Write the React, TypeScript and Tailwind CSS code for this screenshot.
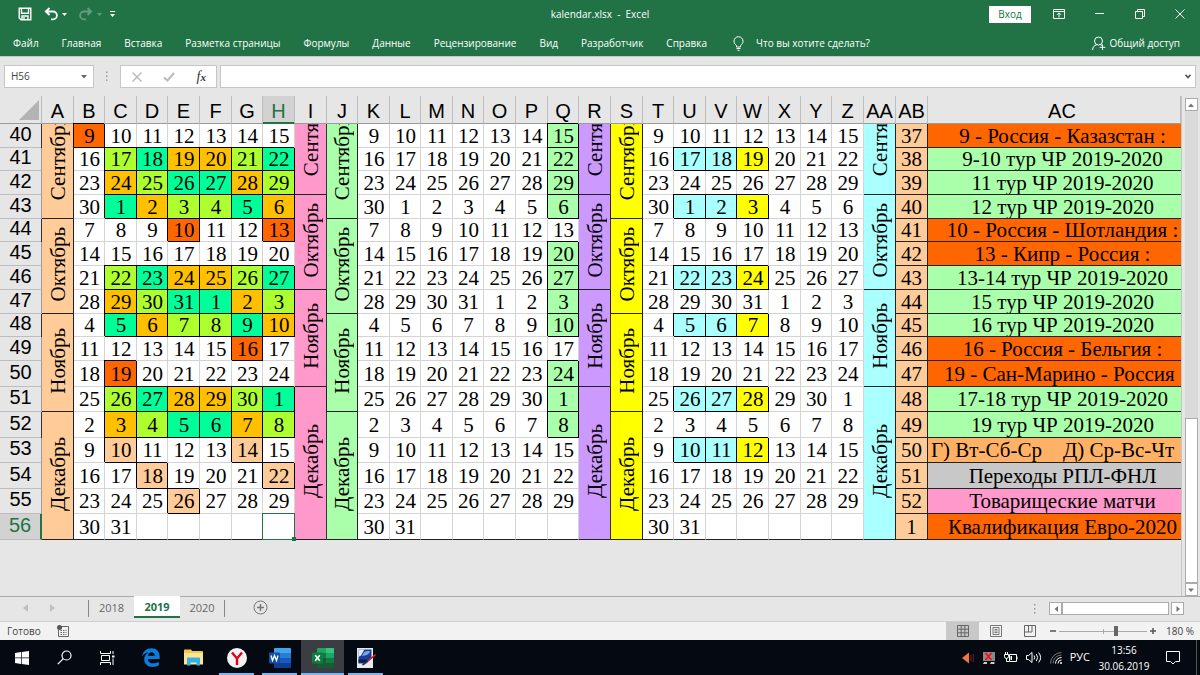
import clsx from 'clsx';
import type { ReactNode } from 'react';

const menu = [
  'Файл',
  'Главная',
  'Вставка',
  'Разметка страницы',
  'Формулы',
  'Данные',
  'Рецензирование',
  'Вид',
  'Разработчик',
  'Справка',
];

const columns = [
  'A', 'B', 'C', 'D', 'E', 'F', 'G', 'H', 'I', 'J', 'K', 'L', 'M', 'N', 'O',
  'P', 'Q', 'R', 'S', 'T', 'U', 'V', 'W', 'X', 'Y', 'Z', 'AA', 'AB', 'AC',
];

// narrow columns are 31px, the rest 32px, AC takes what is left
const narrow = ['B', 'D', 'G', 'J', 'L', 'N', 'Q', 'T', 'V', 'Y'];

const fills: Record<string, string> = {
  g: 'bg-[#adff2f]',
  s: 'bg-[#00ff99]',
  y: 'bg-[#ffc000]',
  o: 'bg-[#ff6600]',
  p: 'bg-[#ffcc99]',
  l: 'bg-[#aaffaa]',
  c: 'bg-[#aaffff]',
  w: 'bg-[#ffff00]',
  d: 'bg-[#ffb266]',
  e: 'bg-[#c8c8c8]',
  k: 'bg-[#ff99cc]',
};

// one line per week: row height, three week blocks, week number, note
const rows = [
  { h: 'h-[24px]', a: 'o......', b: '......l', c: '.......', week: 37, fill: 'o', note: '9 - Россия - Казазстан :' },
  { h: 'h-[23px]', a: '.gsyygs', b: '......l', c: '.ccw...', week: 38, fill: 'l', note: '9-10 тур ЧР 2019-2020' },
  { h: 'h-[24px]', a: '.ygssyg', b: '......l', c: '.......', week: 39, fill: 'l', note: '11 тур ЧР 2019-2020' },
  { h: 'h-[24px]', a: '.syggsy', b: '......l', c: '.ccw...', week: 40, fill: 'l', note: '12 тур ЧР 2019-2020' },
  { h: 'h-[23px]', a: '...o..o', b: '.......', c: '.......', week: 41, fill: 'o', note: '10 - Россия - Шотландия :' },
  { h: 'h-[24px]', a: '.......', b: '......l', c: '.......', week: 42, fill: 'o', note: '13 - Кипр - Россия :' },
  { h: 'h-[24px]', a: '.gsyygs', b: '......l', c: '.ccw...', week: 43, fill: 'l', note: '13-14 тур ЧР 2019-2020' },
  { h: 'h-[24px]', a: '.ygssyg', b: '......l', c: '.......', week: 44, fill: 'l', note: '15 тур ЧР 2019-2020' },
  { h: 'h-[23px]', a: '.syggsy', b: '......l', c: '.ccw...', week: 45, fill: 'l', note: '16 тур ЧР 2019-2020' },
  { h: 'h-[24px]', a: '.....o.', b: '.......', c: '.......', week: 46, fill: 'o', note: '16 - Россия - Бельгия :' },
  { h: 'h-[26px]', a: '.o.....', b: '......l', c: '.......', week: 47, fill: 'o', note: '19 - Сан-Марино - Россия  ' },
  { h: 'h-[25px]', a: '.gsyygs', b: '......l', c: '.ccw...', week: 48, fill: 'l', note: '17-18 тур ЧР 2019-2020' },
  { h: 'h-[26px]', a: '.ygssyg', b: '......l', c: '.......', week: 49, fill: 'l', note: '19 тур ЧР 2019-2020' },
  { h: 'h-[25px]', a: '.p...p.', b: '.......', c: '.ccw...', week: 50, fill: 'd', note: 'Г) Вт-Сб-Ср    Д) Ср-Вс-Чт' },
  { h: 'h-[26px]', a: '..p...p', b: '.......', c: '.......', week: 51, fill: 'e', note: 'Переходы РПЛ-ФНЛ' },
  { h: 'h-[25px]', a: '...p...', b: '.......', c: '.......', week: 52, fill: 'k', note: 'Товарищеские матчи' },
  { h: 'h-[26px]', a: '.......', b: '.......', c: '.......', week: 1, fill: 'o', note: 'Квалификация Евро-2020' },
];

const lateMonths: Record<number, [string, number]> = {
  0: ['Сентябрь', 4],
  4: ['Октябрь', 4],
  8: ['Ноябрь', 4],
  12: ['Декабрь', 5],
};

const earlyMonths: Record<number, [string, number]> = {
  0: ['Сентябрь', 3],
  3: ['Октябрь', 4],
  7: ['Ноябрь', 4],
  11: ['Декабрь', 6],
};

const dayOf = (row: number, col: number) => {
  const date = new Date(Date.UTC(2019, 8, 9 + row * 7 + col));
  return date.getUTCFullYear() === 2019 ? date.getUTCDate() : '';
};

const Month = ({
  row,
  months,
  color,
}: {
  row: number;
  months: Record<number, [string, number]>;
  color: string;
}) => {
  if (!months[row]) return null;
  const [name, span] = months[row];
  return (
    <td
      rowSpan={span}
      className={clsx(
        'p-0 border-r border-b border-[#222] shadow-[-1px_0_0_0_#333]',
        row === 0 ? 'align-bottom' : 'align-middle',
        color
      )}
    >
      <div
        className={clsx(
          'flex justify-center overflow-hidden',
          row === 0 ? 'items-end mb-[18px]' : 'pb-1',
          row === 0 && (span === 4 ? 'h-[76px]' : 'h-[52px]')
        )}
      >
        <span className="leading-6 rotate-180 [writing-mode:vertical-rl]">
          {name}
        </span>
      </div>
    </td>
  );
};

const Week = ({
  row,
  pattern,
  selected,
}: {
  row: number;
  pattern: string;
  selected?: number;
}) => (
  <>
    {pattern.split('').map((code, col) => (
      <td
        key={col}
        className={clsx(
          'relative p-0 pl-px border-r border-b',
          code === '.'
            ? 'bg-white border-[#d4d4d4]'
            : 'border-black shadow-[-1px_-1px_0_0_#000]',
          row === 16 && 'border-b-[#222]',
          fills[code]
        )}
      >
        {dayOf(row, col)}
        {selected === col && (
          <span className="absolute -inset-px border border-[#217346]">
            <span className="absolute -right-0.5 -bottom-0.5 size-1 bg-[#217346]" />
          </span>
        )}
      </td>
    ))}
  </>
);

const Sheet = () => (
  <table className="w-full table-fixed border-separate border-spacing-0 text-center font-['Liberation_Serif',serif] text-[21px] leading-5 text-black">
    <colgroup>
      <col className="w-[42px]" />
      {columns.map((name) => (
        <col
          key={name}
          className={
            name === 'AC' ? '' : narrow.includes(name) ? 'w-[31px]' : 'w-[32px]'
          }
        />
      ))}
    </colgroup>
    <thead className="font-['Liberation_Sans',sans-serif] text-xl/6">
      <tr className="h-[28px]">
        <th className="p-0 border-r border-b border-r-[#bdbdbd] border-b-[#9b9b9b]">
          <svg viewBox="0 0 20 20" className="ml-auto mr-0.5 size-5">
            <path d="M20 0v20H0z" fill="#b3b3b3" />
          </svg>
        </th>
        {columns.map((name) => (
          <th
            key={name}
            className={clsx(
              'p-0 pt-0.5 border-r border-b border-r-[#bdbdbd] font-normal whitespace-nowrap',
              name === 'H'
                ? 'bg-[#d2d2d2] text-[#217346] border-b-[#217346] shadow-[inset_0_-1px_0_0_#217346]'
                : 'border-b-[#9b9b9b]',
              name === 'AC' && 'pl-4'
            )}
          >
            <span className="flex justify-center">{name}</span>
          </th>
        ))}
      </tr>
    </thead>
    <tbody>
      {rows.map((item, row) => (
        <tr key={row} className={item.h}>
          <th
            className={clsx(
              "p-0 pb-1 border-r border-b border-r-[#9b9b9b] border-b-[#bdbdbd] font-['Liberation_Sans',sans-serif] text-xl font-normal leading-4",
              row === 16 && 'bg-[#d2d2d2] text-[#217346] border-r-2 border-r-[#217346]'
            )}
          >
            {40 + row}
          </th>
          <Month row={row} months={lateMonths} color="bg-[#ffcc99]" />
          <Week row={row} pattern={item.a} selected={row === 16 ? 6 : undefined} />
          <Month row={row} months={earlyMonths} color="bg-[#ff99cc]" />
          <Month row={row} months={lateMonths} color="bg-[#aaffaa]" />
          <Week row={row} pattern={item.b} />
          <Month row={row} months={earlyMonths} color="bg-[#cc99ff]" />
          <Month row={row} months={lateMonths} color="bg-[#ffff00]" />
          <Week row={row} pattern={item.c} />
          <Month row={row} months={earlyMonths} color="bg-[#aaffff]" />
          <td className="p-0 border-r border-b border-[#222] bg-[#ffcc99]">
            {item.week}
          </td>
          <td
            className={clsx(
              'p-0 border-b border-[#222] whitespace-pre overflow-hidden',
              item.fill === 'd' ? 'pr-1' : 'pl-4',
              fills[item.fill]
            )}
          >
            {item.note}
          </td>
        </tr>
      ))}
    </tbody>
  </table>
);

const TitleBar = () => (
  <header className="grid grid-cols-3 items-center h-7 px-3">
    <div className="flex items-center gap-3 pl-1.5">
      <button aria-label="Сохранить">
        <svg viewBox="0 0 14 14" className="size-3.5" fill="none" stroke="#fff" strokeWidth="1.4">
          <path d="M1.200 1.200h11.600v11.600H3L1.200 11z M3.500 1.500v4.800h7V1.500 M4 12.500V9h6v3.500" />
          <path d="M6 10v2" />
        </svg>
      </button>
      <button aria-label="Отменить" className="flex items-center gap-1">
        <svg viewBox="0 0 14 14" className="size-3.5" fill="none" stroke="#fff" strokeWidth="1.8">
          <path d="M5.500 1L1.800 4.500 5.500 8 M2 4.500h7a3.700 3.700 0 0 1 0 7.800H7" />
        </svg>
        <svg viewBox="0 0 5 3" className="w-[5px]" fill="#fff"><path d="M0 0h5L2.500 3z" /></svg>
      </button>
      <button aria-label="Вернуть" className="flex items-center gap-1 opacity-30">
        <svg viewBox="0 0 14 14" className="size-3.5" fill="none" stroke="#fff" strokeWidth="1.8">
          <path d="M8.500 1L12.200 4.500 8.500 8 M12 4.500H5a3.700 3.700 0 0 0 0 7.800H7" />
        </svg>
        <svg viewBox="0 0 5 3" className="w-[5px]" fill="#fff"><path d="M0 0h5L2.500 3z" /></svg>
      </button>
      <button aria-label="Настройка панели" className="-ml-1">
        <svg viewBox="0 0 5 7" className="h-[7px] w-[5px]" fill="#fff">
          <path d="M0 0h5v1H0z M0 3h5L2.500 6z" />
        </svg>
      </button>
    </div>
    <h1 className="text-center text-[10px] whitespace-pre">kalendar.xlsx  -  Excel</h1>
    <div className="flex items-center justify-end gap-[30px] pr-[3px]">
      <button className="-mr-2 h-[17px] w-[42px] bg-white text-[10px] text-[#217346]">Вход</button>
      <button aria-label="Параметры ленты">
        <svg viewBox="0 0 12 10" className="h-2.5 w-3" fill="none" stroke="#fff">
          <path d="M.5 .5h11v9H.5z M.5 2.500h11 M6 8.500V4 M4 5.800L6 3.800l2 2" />
        </svg>
      </button>
      <button aria-label="Свернуть">
        <svg viewBox="0 0 10 10" className="size-2.5" stroke="#fff"><path d="M0 4.500h9" /></svg>
      </button>
      <button aria-label="Развернуть">
        <svg viewBox="0 0 10 10" className="size-2.5" fill="none" stroke="#fff">
          <path d="M.5 2.500h7v7h-7z M2.500 2.500v-2h7v7h-2" />
        </svg>
      </button>
      <button aria-label="Закрыть">
        <svg viewBox="0 0 10 10" className="size-2.5" stroke="#fff"><path d="M.5 .5l9 9M9.500 .5l-9 9" /></svg>
      </button>
    </div>
  </header>
);

const Ribbon = () => (
  <nav className="flex items-center h-7 pt-0.5 pl-[13px] pr-3 text-[10px] font-medium whitespace-nowrap">
    <div className="flex gap-[23px]">
      {menu.map((name) => (
        <button key={name}>{name}</button>
      ))}
    </div>
    <button className="flex items-center gap-3 ml-[26px]">
      <svg viewBox="0 0 11 15" className="h-[15px] w-[11px]" fill="none" stroke="#fff">
        <path d="M3.500 11V9.500C2 8.300 1 7 1 5.200a4.500 4.500 0 0 1 9 0C10 7 9 8.300 7.500 9.500V11z M3.500 12.500h4 M4.500 14.300h2" />
      </svg>
      Что вы хотите сделать?
    </button>
    <button className="flex items-center gap-1 ml-auto mr-2">
      <svg viewBox="0 0 14 15" className="h-[15px] w-3.5" fill="none" stroke="#fff">
        <circle cx="6.500" cy="5" r="4" />
        <path d="M.6 14c0-3 1.800-4.800 4-5.200 M8.300 8.500l1.700 1 M10.500 8.500v5.500 M7.700 11.300h5.600" />
      </svg>
      Общий доступ
    </button>
  </nav>
);

const FormulaBar = () => (
  <div className="flex items-stretch h-[40px] pt-2 pb-2 pl-1 pr-1 bg-[#e6e6e6] border-t border-[#c6c6c6] text-[#444]">
    <label className="flex items-center w-[90px] px-1.5 bg-white border border-[#c6c6c6]">
      <input aria-label="Имя" defaultValue="H56" className="w-full min-w-0 text-[10px] outline-none" />
      <svg viewBox="0 0 6 4" className="w-1.5 shrink-0" fill="#666"><path d="M0 0h6L3 3.500z" /></svg>
    </label>
    <svg viewBox="0 0 2 12" className="mx-3 w-0.5" fill="#999">
      <path d="M0 1h1.500v1.500H0z M0 5h1.500v1.500H0z M0 9h1.500v1.500H0z" />
    </svg>
    <div className="flex items-center justify-between w-[97px] pl-[11px] pr-2.5 bg-white border border-[#c6c6c6]">
      <button aria-label="Отмена">
        <svg viewBox="0 0 10 10" className="size-2.5" stroke="#bbb" strokeWidth="1.500"><path d="M.5 .5l9 9M9.500 .5l-9 9" /></svg>
      </button>
      <button aria-label="Ввод">
        <svg viewBox="0 0 12 10" className="h-2.5 w-3" fill="none" stroke="#bbb" strokeWidth="2"><path d="M1 5.500l3.500 3L11 1" /></svg>
      </button>
      <button aria-label="Вставить функцию" className="font-['Liberation_Serif',serif] text-sm leading-4 italic text-[#333]">
        f<span className="text-[11px] font-bold">x</span>
      </button>
    </div>
    <label className="flex items-center grow ml-[3px] pr-1 bg-white border border-[#c6c6c6]">
      <input aria-label="Строка формул" className="grow text-[10px] outline-none" />
      <svg viewBox="0 0 6 5" className="w-1.5" fill="none" stroke="#555" strokeWidth="1.600"><path d="M.5 .8L3 3.500 5.500 .8" /></svg>
    </label>
  </div>
);

const Arrow = ({ d, label }: { d: string; label: string }) => (
  <button aria-label={label} className="flex items-center justify-center shrink-0 size-[13px] bg-white border border-[#ababab]">
    <svg viewBox="0 0 6 6" className="size-1.5" fill="#777"><path d={d} /></svg>
  </button>
);

const VerticalScroll = () => (
  <div className="flex flex-col items-center shrink-0 w-[19px] pt-0.5 border-l border-[#c6c6c6]">
    <Arrow label="Вверх" d="M0 5h6L3 1.500z" />
    <div className="flex flex-col justify-end grow w-[13px] bg-[#dadada]">
      <div className="h-[35%] bg-white border border-[#ababab]" />
    </div>
    <Arrow label="Вниз" d="M0 1.500h6L3 5z" />
  </div>
);

const SheetTabs = () => (
  <div className="flex items-start h-[25px] bg-[#e6e6e6] border-t border-[#ababab] text-[11px] text-[#666]">
    <div className="flex items-center gap-[22px] h-[22px] pl-[23px] w-[88px]">
      <svg viewBox="0 0 5 8" className="h-2 w-[5px]" fill="#c0c0c0"><path d="M5 0v8L0 4z" /></svg>
      <svg viewBox="0 0 5 8" className="h-2 w-[5px]" fill="#c0c0c0"><path d="M0 0v8l5-4z" /></svg>
    </div>
    <button className="h-[17px] mt-[3px] w-[46px] border-l border-[#888]">2018</button>
    <button className="h-[22px] -mt-px pt-0.5 w-[46px] bg-white border-b-2 border-[#217346] font-bold text-[#217346]">2019</button>
    <button className="h-[17px] mt-[3px] w-[45px] border-r border-[#888]">2020</button>
    <button aria-label="Новый лист" className="mt-[3px] ml-7">
      <svg viewBox="0 0 15 15" className="size-[15px]" fill="none" stroke="#777">
        <circle cx="7.500" cy="7.500" r="6.500" />
        <path d="M7.500 4v7M4 7.500h7" strokeWidth="1.500" />
      </svg>
    </button>
    <div className="flex items-center h-[23px] ml-auto mr-4">
      <svg viewBox="0 0 2 10" className="mr-[13px] h-2.5 w-0.5" fill="#999">
        <path d="M0 0h1.500v1.500H0z M0 4h1.500v1.500H0z M0 8h1.500v1.500H0z" />
      </svg>
      <Arrow label="Влево" d="M5 0v6L1.500 3z" />
      <div className="h-[13px] w-[107px] mr-0.5 bg-white border border-[#ababab]" />
      <Arrow label="Вправо" d="M1.500 0v6L5 3z" />
    </div>
  </div>
);

const StatusBar = () => (
  <div className="flex items-center h-[19px] pl-[7px] bg-[#f2f2f2] border-t border-[#d0d0d0] text-[10px] text-[#444]">
    Готово
    <svg viewBox="0 0 12 12" className="ml-4 size-3" fill="none" stroke="#666">
      <path d="M4 1.500h7.500v10h-10V5" />
      <path d="M3.500 5.500h6M3.500 7.500h6M3.500 9.500h6" strokeDasharray="1.500 1" />
      <circle cx="2.500" cy="2.500" r="2.500" fill="#555" stroke="none" />
    </svg>
    <div className="flex h-full ml-auto">
      <button aria-label="Обычный" className="flex items-center justify-center w-[33px] bg-[#c8c8c8]">
        <svg viewBox="0 0 12 12" className="size-3" fill="none" stroke="#666">
          <path d="M.5 .5h11v11H.5z M4.200 .5v11M7.800 .5v11M.5 4.200h11M.5 7.800h11" />
        </svg>
      </button>
      <button aria-label="Разметка" className="flex items-center justify-center w-[34px]">
        <svg viewBox="0 0 12 12" className="size-3" fill="none" stroke="#666">
          <path d="M.5 .5h11v11H.5z M3 2.500h6v7H3z M4.500 4.500h3M4.500 6h3M4.500 7.500h3" strokeWidth=".9" />
        </svg>
      </button>
      <button aria-label="Страничный" className="flex items-center justify-center w-[34px]">
        <svg viewBox="0 0 12 12" className="size-3" fill="none" stroke="#666">
          <path d="M.5 .5h11v11H.5z M4.500 .5v6.500M8 .5v6.500M.5 7H8" />
        </svg>
      </button>
    </div>
    <button aria-label="Уменьшить" className="ml-[3px]">
      <svg viewBox="0 0 6 6" className="size-1.5" stroke="#555" strokeWidth="1.500"><path d="M0 3h6" /></svg>
    </button>
    <input
      type="range"
      aria-label="Масштаб"
      min="0"
      max="100"
      defaultValue="65"
      className="mx-[3px] h-3 w-[88px] appearance-none bg-[linear-gradient(#aaa,#aaa),linear-gradient(#aaa,#aaa)] bg-[length:100%_1px,1px_5px] bg-center bg-no-repeat [&::-webkit-slider-thumb]:appearance-none [&::-webkit-slider-thumb]:h-2.5 [&::-webkit-slider-thumb]:w-1 [&::-webkit-slider-thumb]:bg-[#666]"
    />
    <button aria-label="Увеличить">
      <svg viewBox="0 0 6 6" className="size-1.5" stroke="#555" strokeWidth="1.500"><path d="M0 3h6M3 0v6" /></svg>
    </button>
    <span className="w-11 pr-1.5 text-right">180 %</span>
  </div>
);

const TaskButton = ({
  label,
  active,
  running,
  children,
}: {
  label: string;
  active?: boolean;
  running?: boolean;
  children: ReactNode;
}) => (
  <button
    aria-label={label}
    className={clsx(
      'relative flex items-center justify-center w-[43px] h-full',
      active && 'bg-[#3a3d42]'
    )}
  >
    {children}
    {(running || active) && (
      <span
        className={clsx(
          'absolute bottom-0 h-0.5 bg-[#76b9ed]',
          active ? 'inset-x-0' : 'inset-x-1'
        )}
      />
    )}
  </button>
);

const Taskbar = () => (
  <footer className="flex h-[35px] bg-[#050a12] text-[10px] text-white">
    <TaskButton label="Пуск">
      <svg viewBox="0 0 14 14" className="size-3.5" fill="#fff">
        <path d="M0 2l6-.9v5.500H0z M6.700 1L14 0v6.600H6.700z M0 7.300h6v5.600L0 12z M6.700 7.300H14V14l-7.300-1z" />
      </svg>
    </TaskButton>
    <TaskButton label="Поиск">
      <svg viewBox="0 0 15 15" className="size-[15px]" fill="none" stroke="#fff" strokeWidth="1.200">
        <circle cx="9.500" cy="5.500" r="4.500" />
        <path d="M6.300 8.700L.8 14.200" />
      </svg>
    </TaskButton>
    <TaskButton label="Представление задач">
      <svg viewBox="0 0 15 14" className="h-3.5 w-[15px]" fill="none" stroke="#fff">
        <path d="M1.500 4.500h8v5h-8z M.5 0v2.500h10V0 M.5 14v-2.500h10V14 M13 0v3 M13 7.500V14" />
        <path d="M12 4.500h2.500v2H12z" fill="#fff" stroke="none" />
      </svg>
    </TaskButton>
    <TaskButton label="Edge">
      <svg viewBox="0 0 18 19" className="h-[19px] w-[18px]">
        <path
          fill="#0a7ddd"
          d="M0 8.500C.8 3.500 4.600.3 9.400.3c5 0 8.300 3.400 8.300 8.400v2.200H5.900c.1 3 2.500 4.400 5.400 4.400 2.100 0 3.900-.5 5.500-1.500v3.800c-1.800.9-4 1.400-6.300 1.400C5.700 19 2.200 16 2.200 11.300c0-3 1.700-5.500 4.300-6.800C4 4.600 1.500 6 0 8.500zM6 7.700h6.800c0-2.300-1.200-3.500-3.300-3.500-2 0-3.300 1.400-3.500 3.500z"
        />
      </svg>
    </TaskButton>
    <TaskButton label="Проводник">
      <svg viewBox="0 0 19 17" className="h-[17px] w-[19px]">
        <path d="M0 1.500C0 .8.500.500 1 .500h6l1.200 1.500H18c.6 0 1 .4 1 1V15H0z" fill="#f2c94c" />
        <path d="M0 4h19v11.500H0z" fill="#ffe592" />
        <path d="M3 9.500C3 9 3.500 8.500 4 8.500h11c.6 0 1 .5 1 1V16.500h-3.500v-3h-6v3H3z" fill="#35b1e8" />
      </svg>
    </TaskButton>
    <TaskButton label="Яндекс" running>
      <svg viewBox="0 0 20 20" className="size-5">
        <circle cx="10" cy="10" r="10" fill="#f3f3f3" />
        <path d="M5 4.500l5 6 5-6M10 10v7" fill="none" stroke="#e2001a" strokeWidth="2.400" />
      </svg>
    </TaskButton>
    <TaskButton label="Word" running>
      <svg viewBox="0 0 22 20" className="h-5 w-[22px]">
        <path d="M6 0h15a1 1 0 0 1 1 1v4H5V1a1 1 0 0 1 1-1z" fill="#41a5ee" />
        <path d="M5 5h17v5H5z" fill="#2b7cd3" />
        <path d="M5 10h17v5H5z" fill="#185abd" />
        <path d="M5 15h17v4a1 1 0 0 1-1 1H6a1 1 0 0 1-1-1z" fill="#103f91" />
        <rect y="4.500" width="11" height="11" rx="1" fill="#1350a8" />
        <path d="M2 7.500l1.500 5 2-5 2 5 1.500-5" fill="none" stroke="#fff" strokeWidth="1.300" />
      </svg>
    </TaskButton>
    <TaskButton label="Excel" active>
      <svg viewBox="0 0 22 20" className="h-5 w-[22px]">
        <path d="M6 0h15a1 1 0 0 1 1 1v4H5V1a1 1 0 0 1 1-1z" fill="#21a366" />
        <path d="M14 0h7a1 1 0 0 1 1 1v4h-8z" fill="#33c481" />
        <path d="M5 5h17v5H5z" fill="#107c41" />
        <path d="M14 5h8v5h-8z" fill="#21a366" />
        <path d="M5 10h17v5H5z" fill="#185c37" />
        <path d="M14 10h8v5h-8z" fill="#107c41" />
        <path d="M5 15h17v4a1 1 0 0 1-1 1H6a1 1 0 0 1-1-1z" fill="#185c37" />
        <rect y="4.500" width="11" height="11" rx="1" fill="#107c41" />
        <path d="M3.200 7.300l4.600 5.400M7.800 7.300l-4.600 5.400" fill="none" stroke="#fff" strokeWidth="1.600" />
      </svg>
    </TaskButton>
    <TaskButton label="Рисунок" running>
      <svg viewBox="0 0 20 20" className="size-5">
        <path d="M1 0h16v20H1z" fill="#e8eaf0" />
        <path d="M2.500 1.500h13v9l-6 5h-7z" fill="#1c3f94" />
        <path d="M2.500 1.500h6L5 7.500 2.500 9z" fill="#dfeafc" />
        <path d="M6 8c1-4 5-6 8-4.500-1 3-4 4-8 4.500z" fill="#7ea3e6" />
        <path d="M2.500 11.500h9l-2 3h-7z" fill="#0c1d4f" />
        <path d="M19.500 6.500L12 13" stroke="#d32020" strokeWidth="1.600" />
        <path d="M12 13l-5.500 4" stroke="#333" strokeWidth="1.600" />
      </svg>
    </TaskButton>
    <div className="flex items-center gap-2 ml-auto">
      <svg viewBox="0 0 12 12" className="size-3">
        <path d="M0 6l7-5.500v11z" fill="#f0744a" />
        <path d="M9 3v6M11.300 2v8" stroke="#6b2418" />
      </svg>
      <svg viewBox="0 0 14 14" className="size-3.5">
        <path d="M1 1h12v9H1z" fill="#888" />
        <path d="M3.500 2l6 7M9.500 2l-6 7" stroke="#f21010" strokeWidth="1.800" />
        <path d="M1 13l1-2h3v2z M8 13l1-2h3.500v2z" fill="#ccc" />
      </svg>
      <svg viewBox="0 0 14 12" className="h-3 w-3.5" fill="none" stroke="#fff">
        <path d="M5.500 2.500h7v7h-7z M13 4.500v3" />
        <path d="M1.500 0v2M3.500 0v2M.5 2.500h4v2a2 2 0 0 1-4 0z M2.500 6.500v3H5" />
        <path d="M6.500 4h1.500v4H6.500z" fill="#fff" stroke="none" />
      </svg>
      <svg viewBox="0 0 16 13" className="h-[13px] w-4" fill="none" stroke="#fff">
        <path d="M.5 4.500h2L6 1.500v10l-3.500-3h-2z M8 4.500q1.500 2 0 4 M10.300 3q2.700 3.500 0 7 M12.600 1.500q4 5 0 10" />
      </svg>
      <svg viewBox="0 0 12 13" className="h-[13px] w-3" fill="none" stroke="#fff">
        <path d="M.5 12.500A11 11 0 0 1 11.500 1.500 M3 12.500a8.500 8.500 0 0 1 8.500-8.500" stroke="#777" />
        <path d="M5.500 12.500a6 6 0 0 1 6-6 M8 12.500A3.500 3.500 0 0 1 11.500 9" />
        <circle cx="11" cy="12" r="1" fill="#fff" stroke="none" />
      </svg>
      <span className="text-[11px]">РУС</span>
      <div className="w-[52px] text-center leading-4">
        <div>13:56</div>
        <div>30.06.2019</div>
      </div>
      <button aria-label="Уведомления" className="px-2">
        <svg viewBox="0 0 14 14" className="size-3.5" fill="none" stroke="#fff">
          <path d="M.5 .5h13v10H9.500L7 13 4.500 10.500h-4z" />
        </svg>
      </button>
      <span className="h-full w-1 border-l border-[#555]" />
    </div>
  </footer>
);

const App = () => (
  <div className="flex flex-col h-screen overflow-hidden bg-[#e6e6e6] font-['Open_Sans',sans-serif]">
    <div className="bg-[#217346] text-white">
      <TitleBar />
      <Ribbon />
    </div>
    <FormulaBar />
    <main className="flex grow min-h-0">
      <div className="grow min-w-0 overflow-hidden">
        <Sheet />
      </div>
      <VerticalScroll />
    </main>
    <SheetTabs />
    <StatusBar />
    <Taskbar />
  </div>
);

export default App;
